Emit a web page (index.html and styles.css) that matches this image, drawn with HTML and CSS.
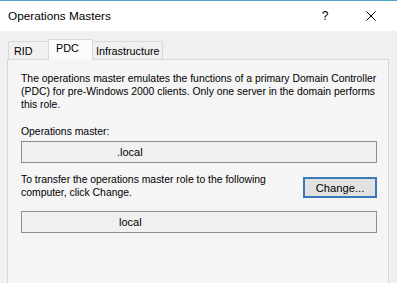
FILE: index.html
```html
<!DOCTYPE html>
<html lang="en">
<head>
  <meta charset="UTF-8">
  <title>Operations Masters</title>
  <link rel="stylesheet" href="styles.css">
</head>
<body>
  <div class="window">
    <!-- Title bar -->
    <div class="titlebar">
      <div class="title">Operations Masters</div>
      <div class="help">?</div>
      <div class="close">
        <svg width="10" height="10" viewBox="0 0 10 10">
          <path d="M0.5 0.5 L9.5 9.5 M9.5 0.5 L0.5 9.5" stroke="#000" stroke-width="1" fill="none"/>
        </svg>
      </div>
    </div>
    <!-- Tabs -->
    <div class="content">
      <ul class="tabs">
        <li class="tab tab-rid">RID</li>
        <li class="tab tab-pdc active">PDC</li>
        <li class="tab tab-infra">Infrastructure</li>
      </ul>
      <div class="panel">
        <p>The operations master emulates the functions of a primary Domain Controller<br>
           (PDC) for pre-Windows 2000 clients. Only one server in the domain performs<br>
           this role.</p>
        <label class="label">Operations master:</label>
        <div class="field field-current">.local</div>
        <div class="transfer">
          <p>To transfer the operations master role to the following<br>computer, click Change.</p>
          <button class="btn">Change...</button>
        </div>
        <div class="field field-target">local</div>
      </div>
    </div>
  </div>
</body>
</html>
```

FILE: styles.css
```css
* {
  margin: 0;
  padding: 0;
  box-sizing: border-box;
}
body {
  font-family: 'Liberation Sans', Arial, sans-serif;
  background: #f0f0f0;
  color: #000;
}
.window {
  width: 397px;
  height: 283px;
  overflow: hidden;
  background: #f0f0f0;
  border-top: 1px solid #4aa2c9;
}
/* Title bar */
.titlebar {
  height: 30px;
  background: #fff;
  display: flex;
  align-items: center;
  padding-left: 8px;
  padding-bottom: 1px;
}
.title {
  font-size: 11.8px;
  flex: 1;
}
.help {
  font-size: 12px;
  width: 10px;
  margin-right: 36px;
  text-align: center;
}
.close {
  width: 10px;
  height: 10px;
  margin-right: 21px;
  display: flex;
}
/* Tabs */
.content {
  padding: 8px 8px 0 7px;
}
.tabs {
  list-style: none;
  display: flex;
  align-items: flex-end;
  padding-left: 1px;
  height: 20px;
}
.tab {
  font-size: 10.8px;
  height: 18px;
  line-height: 19px;
  border: 1px solid #d9d9d9;
  border-bottom: none;
  border-right: none;
  background: #f0f0f0;
  white-space: nowrap;
}
.tab-rid {
  width: 40px;
  padding-left: 5px;
}
.tab-pdc {
  width: 45px;
  padding-left: 7px;
}
.tab-infra {
  width: 70px;
  padding-left: 3px;
  border-right: 1px solid #d9d9d9;
}
.tab.active {
  height: 21px;
  line-height: 17px;
  background: #fbfbfb;
  border-right: 1px solid #d9d9d9;
  margin-bottom: -1px;
  position: relative;
  z-index: 1;
}
.tab.active + .tab {
  border-left: none;
}
.panel {
  border: 1px solid #d9d9d9;
  border-bottom: none;
  background: #f5f5f5;
  height: 240px;
  padding: 12px 11px 0 13px;
  font-size: 10.4px;
  line-height: 13px;
  white-space: nowrap;
}
.label {
  display: block;
  margin-top: 14px;
}
.field {
  height: 22px;
  margin-top: 3px;
  border: 1px solid #8f8f8f;
  background: #f0f0f0;
  display: flex;
  align-items: center;
  font-size: 11px;
}
.field-current {
  padding-left: 95px;
}
.field-target {
  margin-top: 12px;
  padding-left: 97px;
}
.transfer {
  margin-top: 10px;
  display: flex;
  justify-content: space-between;
  align-items: center;
}
.btn {
  width: 74px;
  height: 21px;
  margin-top: 3px;
  font-family: inherit;
  font-size: 11.2px;
  background: #e1e1e1;
  border: 2px solid #3a7ab8;
  color: #000;
}
```
